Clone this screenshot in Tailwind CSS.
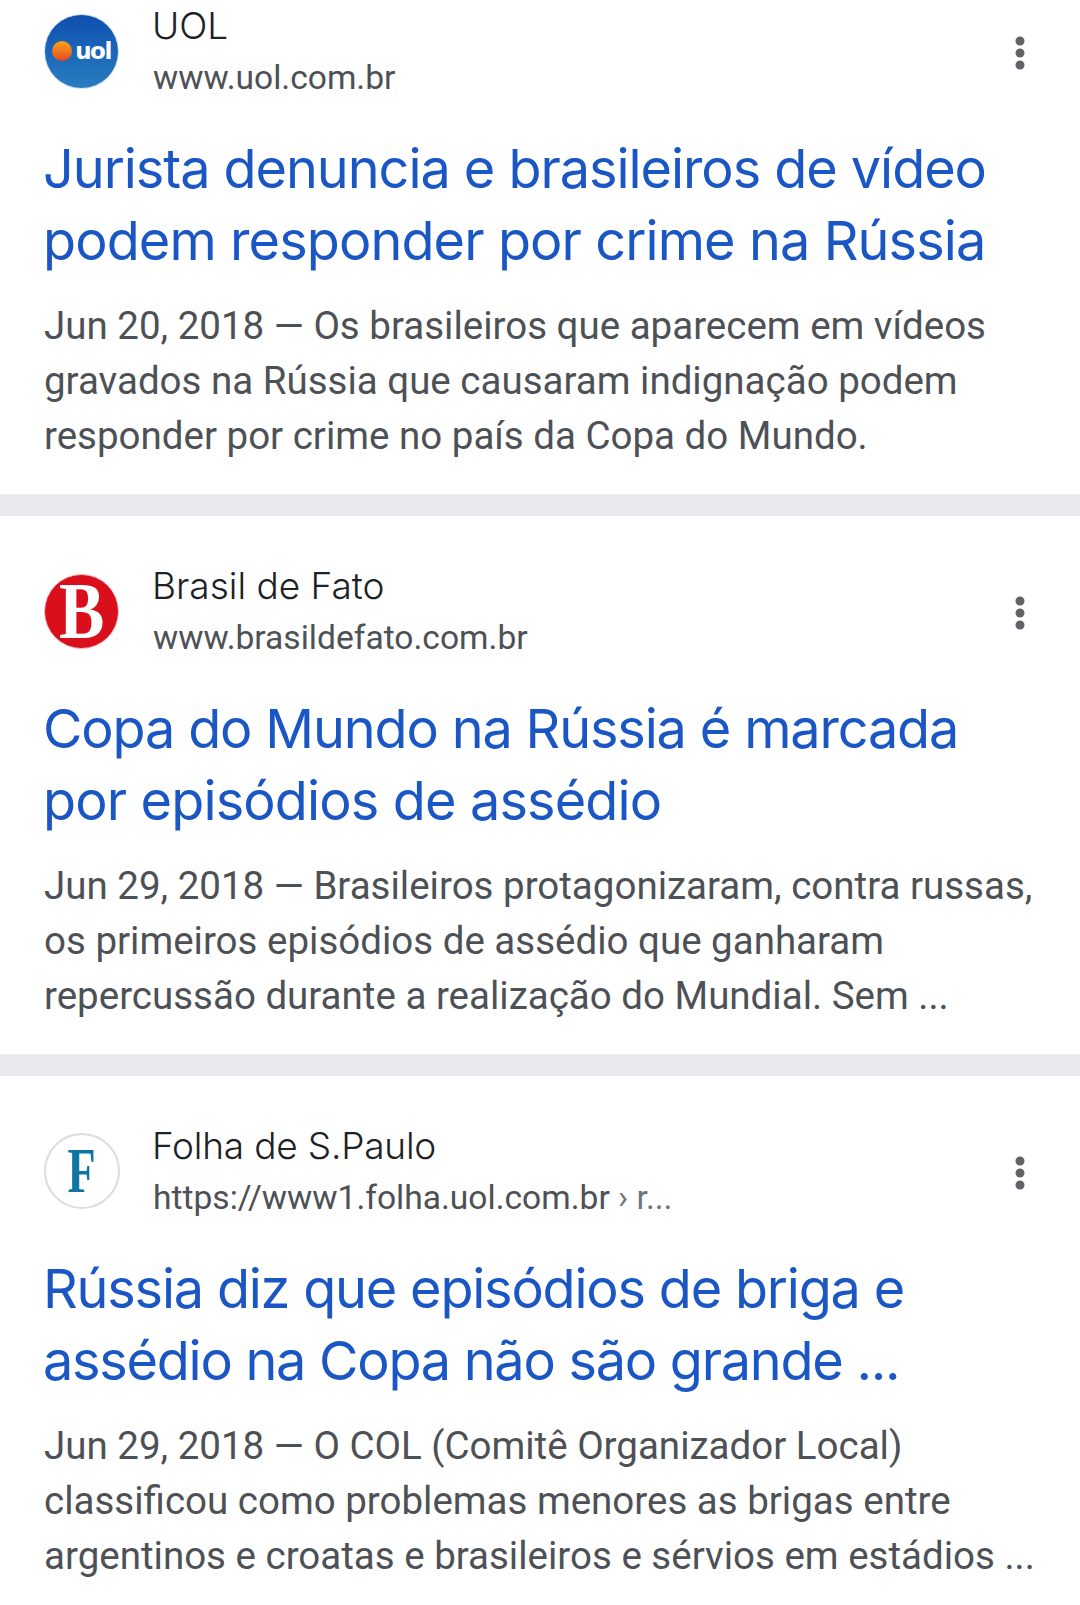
<!DOCTYPE html>
<html lang="pt-BR">
<head>
    <meta charset="UTF-8">
    <meta name="viewport" content="width=device-width, initial-scale=1.0">
    <title>Resultados</title>
    <script src="https://cdn.jsdelivr.net/npm/@tailwindcss/browser@4"></script>
</head>
<body class="bg-white w-[1080px] h-[1605px] overflow-hidden font-['Roboto',sans-serif]">
    <!-- UOL -->
    <section class="h-[494px] px-[44px] bg-white">
        <div class="flex items-center h-[102px]">
            <div class="w-[75px] h-[75px] rounded-full bg-gradient-to-b from-[#0f4fb0] to-[#2a7cc0] border border-[#cfe0f0] flex items-center justify-center gap-[3px] shrink-0">
                <span class="w-[20px] h-[20px] rounded-full bg-gradient-to-b from-[#f5a21c] to-[#e8431f] shrink-0"></span>
                <span class="text-white text-[23px] font-black leading-none tracking-[-1.5px] font-['DejaVu_Sans',sans-serif]">uol</span>
            </div>
            <div class="ml-[33px] flex-1">
                <p class="text-[37px] leading-[52px] text-[#202124] font-['Inter',sans-serif] font-light">UOL</p>
                <p class="text-[33.6px] leading-[50px] pl-[1px] mt-[1px] text-[#4d5156]">www.uol.com.br</p>
            </div>
            <svg class="w-[12px] h-[36px] mr-[10px] mt-[3px]" viewBox="0 0 12 36"><circle cx="6" cy="6" r="4.5" fill="#5f6368"/><circle cx="6" cy="18" r="4.5" fill="#5f6368"/><circle cx="6" cy="30" r="4.5" fill="#5f6368"/></svg>
        </div>
        <h2 class="mt-[31px] -ml-[1px] text-[54px] leading-[72px] text-[#1a56c4] font-['Inter',sans-serif] font-[375]">
            <span class="block tracking-[-1.05px]">Jurista denuncia e brasileiros de vídeo</span>
            <span class="block tracking-[-0.9px]">podem responder por crime na Rússia</span>
        </h2>
        <p class="mt-[21px] text-[38.5px] leading-[55px] text-[#4d5156]">Jun 20, 2018 — Os brasileiros que aparecem em vídeos<br>gravados na Rússia que causaram indignação podem<br>responder por crime no país da Copa do Mundo.</p>
    </section>
    <div class="h-[22px] bg-[#e8eaed]"></div>

    <!-- Brasil de Fato -->
    <section class="h-[538px] px-[44px] pt-[44px] bg-white">
        <div class="flex items-center h-[102px]">
            <div class="w-[75px] h-[75px] rounded-full bg-[#d90f1c] border border-[#f0c0c4] flex items-center justify-center shrink-0">
                <span class="text-white text-[80px] leading-[73px] font-bold font-['Liberation_Serif',serif] scale-x-[.85]">B</span>
            </div>
            <div class="ml-[33px] flex-1">
                <p class="text-[37px] leading-[52px] text-[#202124] font-['Inter',sans-serif] font-light">Brasil de Fato</p>
                <p class="text-[33.6px] leading-[50px] pl-[1px] mt-[1px] text-[#4d5156]">www.brasildefato.com.br</p>
            </div>
            <svg class="w-[12px] h-[36px] mr-[10px] mt-[3px]" viewBox="0 0 12 36"><circle cx="6" cy="6" r="4.5" fill="#5f6368"/><circle cx="6" cy="18" r="4.5" fill="#5f6368"/><circle cx="6" cy="30" r="4.5" fill="#5f6368"/></svg>
        </div>
        <h2 class="mt-[31px] -ml-[1px] text-[54px] leading-[72px] text-[#1a56c4] font-['Inter',sans-serif] font-[375]">
            <span class="block tracking-[-1.155px]">Copa do Mundo na Rússia é marcada</span>
            <span class="block tracking-[-0.85px]">por episódios de assédio</span>
        </h2>
        <p class="mt-[21px] text-[38.5px] leading-[55px] text-[#4d5156]">Jun 29, 2018 — Brasileiros protagonizaram, contra russas,<br>os primeiros episódios de assédio que ganharam<br>repercussão durante a realização do Mundial. Sem ...</p>
    </section>
    <div class="h-[22px] bg-[#e8eaed]"></div>

    <!-- Folha -->
    <section class="px-[44px] pt-[44px] bg-white">
        <div class="flex items-center h-[102px]">
            <div class="w-[76px] h-[76px] rounded-full bg-white border-2 border-[#dcdcdc] flex items-center justify-center shrink-0">
                <span class="text-[#0f75a5] text-[64px] leading-none font-bold font-['Liberation_Serif',serif] scale-x-[.72]">F</span>
            </div>
            <div class="ml-[32px] flex-1">
                <p class="text-[37px] leading-[52px] text-[#202124] font-['Inter',sans-serif] font-light tracking-[-0.2px]">Folha de S.Paulo</p>
                <p class="text-[33.6px] leading-[50px] pl-[1px] mt-[1px] text-[#4d5156]">https://www1.folha.uol.com.br <span class="text-[#70757a]">› r...</span></p>
            </div>
            <svg class="w-[12px] h-[36px] mr-[10px] mt-[3px]" viewBox="0 0 12 36"><circle cx="6" cy="6" r="4.5" fill="#5f6368"/><circle cx="6" cy="18" r="4.5" fill="#5f6368"/><circle cx="6" cy="30" r="4.5" fill="#5f6368"/></svg>
        </div>
        <h2 class="mt-[31px] -ml-[1px] text-[54px] leading-[72px] text-[#1a56c4] font-['Inter',sans-serif] font-[375]">
            <span class="block tracking-[-1.2px]">Rússia diz que episódios de briga e</span>
            <span class="block tracking-[-1.26px]">assédio na Copa não são grande ...</span>
        </h2>
        <p class="mt-[21px] text-[38.5px] leading-[55px] text-[#4d5156]">Jun 29, 2018 — O COL (Comitê Organizador Local)<br>classificou como problemas menores as brigas entre<br>argentinos e croatas e brasileiros e sérvios em estádios ...</p>
    </section>
</body>
</html>
